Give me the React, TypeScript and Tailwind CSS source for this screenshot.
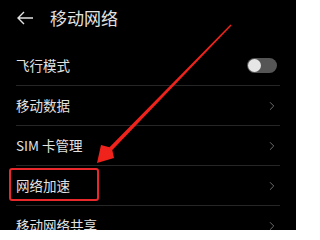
import { ChevronRight } from "lucide-react"

const rows = [
  { label: "移动数据" },
  { label: "SIM 卡管理" },
  { label: "网络加速", marked: true },
  { label: "移动网络共享" },
]

function Toggle() {
  return (
    <div className="flex h-[15px] w-[30px] items-center rounded-full bg-[#555555] px-[1px]">
      <div className="h-[13px] w-[13px] rounded-full bg-[#e6e6e6]" />
    </div>
  )
}

export default function App() {
  return (
    <div
      className="relative h-[230px] w-[296px] overflow-hidden bg-black text-[#e2e2e2]"
      style={{ fontFamily: '"Noto Sans CJK SC", "Noto Sans", sans-serif' }}
    >
      <header className="flex h-[35px] items-center pl-[16px]">
        <svg width="18" height="16" viewBox="0 0 18 16" fill="none" stroke="#e2e2e2" strokeWidth="1.4">
          <path d="M17 8H2M8 2L2 8l6 6" />
        </svg>
        <span className="ml-[16px] text-[17px] leading-none">移动网络</span>
      </header>

      <div className="mt-[11px] px-[16px]">
        <div className="flex h-[40px] items-center justify-between border-b border-[#262626]">
          <span className="text-[13.5px]">飞行模式</span>
          <div className="mr-[3px]">
            <Toggle />
          </div>
        </div>
        {rows.map((row) => (
          <div
            key={row.label}
            className="relative flex h-[40px] items-center justify-between border-b border-[#262626]"
          >
            <span className="text-[13.5px]">{row.label}</span>
            <ChevronRight className="mr-[1px] h-[14px] w-[14px] text-[#7a7a7a]" strokeWidth={1.5} />
            {row.marked && (
              <div className="absolute left-[-7px] top-[2px] h-[33px] w-[90px] rounded-[3px] border-2 border-[#e8282b]" />
            )}
          </div>
        ))}
      </div>

      <svg className="absolute left-0 top-0" width="296" height="230" viewBox="0 0 296 230">
        <polygon
          points="231.5,25.5 230.5,24.5 109.5,147.2 101,145 97,163 114,158 112.3,150"
          fill="#f0231c"
        />
      </svg>
    </div>
  )
}
